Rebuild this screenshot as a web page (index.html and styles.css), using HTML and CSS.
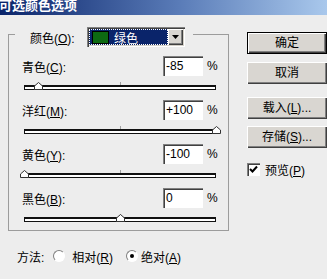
FILE: index.html
```html
<!DOCTYPE html>
<html lang="zh-CN">
<head>
  <meta charset="UTF-8">
  <title>可选颜色选项</title>
  <link rel="stylesheet" href="styles.css">
</head>
<body>

  <div class="titlebar"><span class="title">可选颜色选项</span></div>

  <div class="main">
    <div class="group">
      <div class="group-head">
        <span class="head-label">颜色(<u>O</u>):</span>
        <div class="select">
          <div class="select-value"><span class="swatch"></span>绿色</div>
          <div class="select-arrow">
            <svg width="7" height="4" viewBox="0 0 7 4"><path d="M0 0h7L3.5 4z" fill="#000"/></svg>
          </div>
        </div>
      </div>

      <div class="rows">
        <div class="block">
          <div class="row"><span class="label">青色(<u>C</u>):</span><span class="field">-85</span><span class="pct">%</span></div>
          <div class="slider">
            <div class="track"></div>
            <svg class="thumb" style="left: calc(7.5% - 4px)" width="9" height="8" viewBox="0 0 9 8"><path d="M.5 7.5V4L4.5.5 8.5 4v3.5z" fill="#fff" stroke="#333"/></svg>
          </div>
        </div>
        <div class="block">
          <div class="row"><span class="label">洋红(<u>M</u>):</span><span class="field">+100</span><span class="pct">%</span></div>
          <div class="slider">
            <div class="track"></div>
            <svg class="thumb" style="left: calc(100% - 4px)" width="9" height="8" viewBox="0 0 9 8"><path d="M.5 7.5V4L4.5.5 8.5 4v3.5z" fill="#fff" stroke="#333"/></svg>
          </div>
        </div>
        <div class="block">
          <div class="row"><span class="label">黄色(<u>Y</u>):</span><span class="field">-100</span><span class="pct">%</span></div>
          <div class="slider">
            <div class="track"></div>
            <svg class="thumb" style="left: calc(0% - 4px)" width="9" height="8" viewBox="0 0 9 8"><path d="M.5 7.5V4L4.5.5 8.5 4v3.5z" fill="#fff" stroke="#333"/></svg>
          </div>
        </div>
        <div class="block">
          <div class="row"><span class="label">黑色(<u>B</u>):</span><span class="field">0</span><span class="pct">%</span></div>
          <div class="slider">
            <div class="track"></div>
            <svg class="thumb" style="left: calc(50% - 4px)" width="9" height="8" viewBox="0 0 9 8"><path d="M.5 7.5V4L4.5.5 8.5 4v3.5z" fill="#fff" stroke="#333"/></svg>
          </div>
        </div>
      </div>
    </div>

    <div class="side">
      <div class="btn btn-default">确定</div>
      <div class="btn btn-cancel">取消</div>
      <div class="btn btn-load">载入(<u>L</u>)...</div>
      <div class="btn btn-save">存储(<u>S</u>)...</div>
      <div class="check-row">
        <span class="checkbox">
          <svg width="9" height="9" viewBox="0 0 9 9"><path d="M1 4l2.5 2.5L8 1.5" fill="none" stroke="#000" stroke-width="2"/></svg>
        </span>
        <span>预览(<u>P</u>)</span>
      </div>
    </div>
  </div>

  <div class="method">
    <span>方法:</span>
    <span class="radio radio-first"></span>
    <span class="radio-label">相对(<u>R</u>)</span>
    <span class="radio radio-on"></span>
    <span class="radio-label radio-label-tight">绝对(<u>A</u>)</span>
  </div>

</body>
</html>
```

FILE: styles.css
```css
body {
  margin: 0;
  width: 327px;
  height: 279px;
  overflow: hidden;
  background-color: #ededed;
  font-family: "Liberation Sans", "Noto Sans CJK SC", sans-serif;
  font-size: 12px;
  color: #000;
}

u {
  text-underline-offset: 1px;
}

.titlebar {
  height: 15px;
  overflow: hidden;
  background: linear-gradient(to right, #0a246a, #5a7cb8 55%, #a9c8ec);
}

.title {
  display: block;
  margin: -2px 0 0 -1px;
  font-size: 13px;
  font-weight: bold;
  line-height: 15px;
  color: #fff;
}

.main {
  display: flex;
  align-items: flex-start;
  padding-left: 8px;
}

/* group box */
.group {
  box-sizing: border-box;
  width: 227px;
  height: 197px;
  margin-top: 19px;
  border: 1px solid #9c9c9c;
}

.group-head {
  display: flex;
  align-items: center;
  box-sizing: border-box;
  width: 178px;
  height: 20px;
  margin: -8px 0 0 6px;
  padding-left: 15px;
  background-color: #ededed;
}

.head-label {
  width: 57px;
}

.select {
  display: flex;
  box-sizing: border-box;
  width: 98px;
  height: 20px;
  padding: 2px;
  background-color: #fff;
  box-shadow: inset 1px 1px #808080, inset 2px 2px #404040, inset -1px -1px #fff, inset -2px -2px #d4d0c8;
}

.select-value {
  display: flex;
  align-items: center;
  gap: 5px;
  flex: 1;
  padding-left: 3px;
  background-color: #0a246a;
  outline: 1px dotted #fff;
  outline-offset: -1px;
  color: #fff;
}

.swatch {
  box-sizing: border-box;
  width: 17px;
  height: 13px;
  border: 1px solid #000;
  background-color: #0d6a12;
}

.select-arrow {
  display: flex;
  align-items: center;
  justify-content: center;
  width: 15px;
  background-color: #d9d6d1;
  box-shadow: inset 1px 1px #fff, inset -1px -1px #404040, inset -2px -2px #808080;
}

.rows {
  padding-top: 9px;
}

.row {
  display: flex;
  align-items: center;
  height: 20px;
  padding: 0 8px 0 13px;
}

.label {
  flex: 1;
}

.field {
  box-sizing: border-box;
  width: 40px;
  height: 20px;
  padding-left: 3px;
  line-height: 20px;
  background-color: #fff;
  box-shadow: inset 1px 1px #808080, inset 2px 2px #404040, inset -1px -1px #fff;
}

.pct {
  width: 13px;
  margin-left: 4px;
}

.slider {
  position: relative;
  box-sizing: border-box;
  height: 24px;
  margin: 0 12px 0 15px;
  padding-top: 9px;
}

.track {
  position: relative;
  box-sizing: border-box;
  height: 5px;
  border: 1px solid #111;
  border-top-width: 2px;
  background-color: #fff;
}

.track::before {
  content: "";
  position: absolute;
  left: 50%;
  top: -5px;
  width: 1px;
  height: 3px;
  background-color: #a0a0a0;
}

.thumb {
  position: absolute;
  top: 6px;
}

/* right column */
.side {
  display: flex;
  flex-direction: column;
  margin: 17px 0 0 18px;
}

.btn {
  box-sizing: border-box;
  width: 80px;
  height: 22px;
  line-height: 22px;
  text-align: center;
  background-color: #d9d6d1;
  box-shadow: inset 1px 1px #fff, inset -1px -1px #404040, inset -2px -2px #808080;
}

.btn-default {
  border: 1px solid #000;
  line-height: 20px;
}

.btn-cancel {
  margin-top: 8px;
}

.btn-load {
  margin-top: 13px;
}

.btn-save {
  margin-top: 7px;
}

.check-row {
  display: flex;
  align-items: center;
  gap: 5px;
  margin-top: 13px;
}

.checkbox {
  display: flex;
  align-items: center;
  justify-content: center;
  box-sizing: border-box;
  width: 13px;
  height: 13px;
  background-color: #fff;
  box-shadow: inset 1px 1px #808080, inset 2px 2px #404040, inset -1px -1px #fff;
}

/* bottom radios */
.method {
  display: flex;
  align-items: center;
  height: 20px;
  margin-top: 15px;
  padding-left: 17px;
}

.radio {
  position: relative;
  box-sizing: border-box;
  width: 12px;
  height: 12px;
  border-radius: 50%;
  border: 1px solid;
  border-color: #808080 #fff #fff #808080;
  background-color: #fff;
}

.radio-first {
  margin-left: 9px;
}

.radio-on {
  margin-left: 13px;
}

.radio-on::after {
  content: "";
  position: absolute;
  left: 3px;
  top: 3px;
  width: 4px;
  height: 4px;
  border-radius: 50%;
  background-color: #000;
}

.radio-label {
  margin-left: 7px;
}

.radio-label-tight {
  margin-left: 3px;
}
```
